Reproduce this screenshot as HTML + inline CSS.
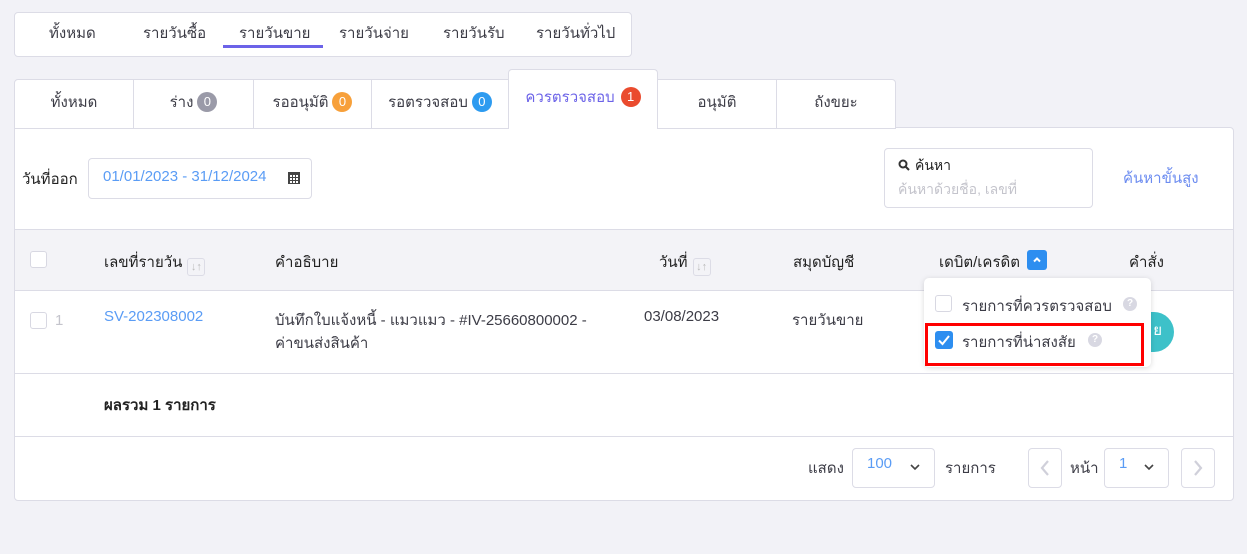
<!DOCTYPE html>
<html><head><meta charset="utf-8"><style>
*{box-sizing:border-box;margin:0;padding:0}
body{width:1247px;height:554px;background:#f2f2f7;font-family:"Liberation Sans","Noto Sans CJK SC",sans-serif;font-size:15px;color:#3c3c46;position:relative;overflow:hidden}
.a{position:absolute;white-space:nowrap}
.box{position:absolute;background:#fff;border:1px solid #dcdce6;border-radius:4px}
.badge{display:inline-block;width:20px;height:20px;border-radius:10px;color:#fff;font-size:13px;text-align:center;line-height:20px;vertical-align:1px;margin-left:4px}
.tab{position:absolute;top:79px;height:50px;background:#fff;border:1px solid #dcdce6;text-align:center;line-height:46px}
.cb{position:absolute;width:17px;height:17px;border:1px solid #d8d8e2;border-radius:3px;background:#fff}
.sort{display:inline-block;width:18px;height:18px;border:1px solid #dcdce6;border-radius:3px;vertical-align:-3px;margin-left:5px;font-size:11px;color:#bbb;text-align:center;line-height:16px;font-weight:bold}
.q{position:absolute;width:14px;height:14px;border-radius:7px;background:#d8d8e2;color:#fff;font-size:10px;text-align:center;line-height:14px;font-weight:bold}
</style></head><body>
<div class="box" style="left:14px;top:12px;width:618px;height:45px"></div>
<div class="a" style="left:49px;top:21px">ทั้งหมด</div>
<div class="a" style="left:143px;top:21px">รายวันซื้อ</div>
<div class="a" style="left:239px;top:21px">รายวันขาย</div>
<div class="a" style="top:45px;height:3px;background:#6c63e8;left:223px;width:100px"></div>
<div class="a" style="left:339px;top:21px">รายวันจ่าย</div>
<div class="a" style="left:443px;top:21px">รายวันรับ</div>
<div class="a" style="left:536px;top:21px">รายวันทั่วไป</div>

<div class="box" style="left:14px;top:127px;width:1220px;height:374px;border-radius:0 4px 4px 4px"></div>
<div class="tab" style="left:14px;width:120px;border-radius:4px 0 0 0">ทั้งหมด</div>
<div class="tab" style="left:133px;width:121px">ร่าง<span class="badge" style="background:#9a9aa8">0</span></div>
<div class="tab" style="left:253px;width:119px">รออนุมัติ<span class="badge" style="background:#f7a03a">0</span></div>
<div class="tab" style="left:371px;width:138px">รอตรวจสอบ<span class="badge" style="background:#2d9bf0">0</span></div>
<div class="tab" style="left:508px;top:69px;height:60px;width:150px;border-bottom:none;border-radius:4px 4px 0 0;color:#6c63e8;line-height:56px">ควรตรวจสอบ<span class="badge" style="background:#ea4b2e;margin-left:6px">1</span></div>
<div class="tab" style="left:657px;width:120px">อนุมัติ</div>
<div class="tab" style="left:776px;width:120px;border-radius:0 4px 0 0">ถังขยะ</div>

<div class="a" style="left:22px;top:167px;color:#222">วันที่ออก</div>
<div class="box" style="left:88px;top:158px;width:224px;height:41px"></div>
<div class="a" style="left:103px;top:168px;color:#5a9cf5">01/01/2023 - 31/12/2024</div>
<svg class="a" style="left:288px;top:171px" width="12" height="13"><rect x="0" y="1" width="12" height="12" fill="#444"/><g fill="#fff"><rect x="2" y="4" width="2" height="2"/><rect x="5" y="4" width="2" height="2"/><rect x="8" y="4" width="2" height="2"/><rect x="2" y="7" width="2" height="2"/><rect x="5" y="7" width="2" height="2"/><rect x="8" y="7" width="2" height="2"/><rect x="2" y="10" width="2" height="2"/><rect x="5" y="10" width="2" height="2"/><rect x="8" y="10" width="2" height="2"/></g></svg>

<div class="box" style="left:884px;top:148px;width:209px;height:60px"></div>
<svg class="a" style="left:898px;top:159px" width="12" height="12"><circle cx="5" cy="5" r="3.5" stroke="#333" stroke-width="2" fill="none"/><line x1="7.5" y1="7.5" x2="11" y2="11" stroke="#333" stroke-width="2"/></svg>
<div class="a" style="left:915px;top:155px;font-size:14px;color:#222">ค้นหา</div>
<div class="a" style="left:898px;top:179px;font-size:14px;color:#c4c4cc">ค้นหาด้วยชื่อ, เลขที่</div>
<div class="a" style="left:1123px;top:166px;color:#6c8cf0">ค้นหาขั้นสูง</div>

<div class="a" style="left:15px;top:229px;width:1218px;height:62px;background:#f3f3f7;border-top:1px solid #dcdce6;border-bottom:1px solid #dcdce6"></div>
<div class="cb" style="left:30px;top:251px"></div>
<div class="a" style="left:104px;top:250px;color:#222">เลขที่รายวัน<span class="sort">↓↑</span></div>
<div class="a" style="left:275px;top:250px;color:#222">คำอธิบาย</div>
<div class="a" style="left:659px;top:250px;color:#222">วันที่<span class="sort">↓↑</span></div>
<div class="a" style="left:793px;top:250px;color:#222">สมุดบัญชี</div>
<div class="a" style="left:939px;top:250px;color:#222">เดบิต/เครดิต</div>
<div class="a" style="left:1027px;top:250px;width:20px;height:20px;background:#2d8ef0;border-radius:3px"><svg width="20" height="20"><path d="M7 11.5l3-3 3 3" stroke="#fff" stroke-width="2" fill="none"/></svg></div>
<div class="a" style="left:1129px;top:250px;color:#222">คำสั่ง</div>

<div class="cb" style="left:30px;top:312px"></div>
<div class="a" style="left:55px;top:312px;color:#c4c4cc">1</div>
<div class="a" style="left:104px;top:308px;color:#5a9cf5">SV-202308002</div>
<div class="a" style="left:275px;top:308px">บันทึกใบแจ้งหนี้ - แมวแมว - #IV-25660800002 -</div>
<div class="a" style="left:275px;top:331px">ค่าขนส่งสินค้า</div>
<div class="a" style="left:644px;top:308px">03/08/2023</div>
<div class="a" style="left:792px;top:308px">รายวันขาย</div>
<div class="a" style="left:1125px;top:312px;width:49px;height:40px;border-radius:20px;background:#3dc1c9;color:#fff;text-align:right;padding-right:12px;line-height:38px">ย</div>

<div class="a" style="left:15px;top:373px;width:1218px;height:1px;background:#dcdce6"></div>
<div class="a" style="left:104px;top:393px;color:#222;font-weight:bold">ผลรวม 1 รายการ</div>
<div class="a" style="left:15px;top:436px;width:1218px;height:1px;background:#dcdce6"></div>

<div class="a" style="left:808px;top:456px">แสดง</div>
<div class="box" style="left:852px;top:448px;width:83px;height:40px"></div>
<div class="a" style="left:867px;top:455px;color:#5a9cf5">100</div>
<svg class="a" style="left:909px;top:463px" width="12" height="8"><path d="M2 2l4 4 4-4" stroke="#444" stroke-width="1.6" fill="none"/></svg>
<div class="a" style="left:945px;top:456px">รายการ</div>
<div class="box" style="left:1028px;top:448px;width:34px;height:40px"><svg width="32" height="38"><path d="M19 12l-6 7 6 7" stroke="#d0d0da" stroke-width="2.2" fill="none"/></svg></div>
<div class="a" style="left:1070px;top:456px">หน้า</div>
<div class="box" style="left:1104px;top:448px;width:65px;height:40px"></div>
<div class="a" style="left:1119px;top:455px;color:#5a9cf5">1</div>
<svg class="a" style="left:1143px;top:463px" width="12" height="8"><path d="M2 2l4 4 4-4" stroke="#444" stroke-width="1.6" fill="none"/></svg>
<div class="box" style="left:1181px;top:448px;width:34px;height:40px"><svg width="32" height="38"><path d="M13 12l6 7-6 7" stroke="#d0d0da" stroke-width="2.2" fill="none"/></svg></div>

<div class="a" style="left:924px;top:278px;width:227px;height:89px;background:#fff;border-radius:5px;box-shadow:0 1px 6px rgba(0,0,0,.15)"></div>
<div class="cb" style="left:935px;top:295px"></div>
<div class="a" style="left:962px;top:294px">รายการที่ควรตรวจสอบ</div>
<div class="q" style="left:1123px;top:297px">?</div>
<div class="a" style="left:925px;top:323px;width:219px;height:43px;border:3px solid #f00"></div>
<div class="a" style="left:935px;top:331px;width:18px;height:18px;background:#2d8ef0;border-radius:3px"><svg width="18" height="18"><path d="M4 9.5l3.5 3.5L14 5" stroke="#fff" stroke-width="2" fill="none"/></svg></div>
<div class="a" style="left:962px;top:330px">รายการที่น่าสงสัย</div>
<div class="q" style="left:1088px;top:333px">?</div>
</body></html>
